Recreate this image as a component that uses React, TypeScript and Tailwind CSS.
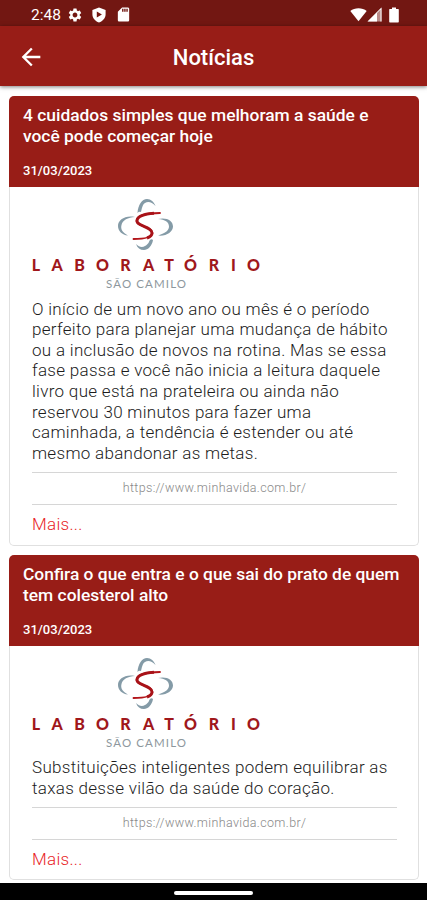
import React, { type ReactElement } from "react";
import { MdArrowBack, MdSettings, MdSdCard } from "react-icons/md";

type NewsItem = {
  title: string[];
  date: string;
  text: string[];
  source: string;
};

const news: NewsItem[] = [
  {
    title: ["4 cuidados simples que melhoram a saúde e", "você pode começar hoje"],
    date: "31/03/2023",
    text: [
      "O início de um novo ano ou mês é o período",
      "perfeito para planejar uma mudança de hábito",
      "ou a inclusão de novos na rotina. Mas se essa",
      "fase passa e você não inicia a leitura daquele",
      "livro que está na prateleira ou ainda não",
      "reservou 30 minutos para fazer uma",
      "caminhada, a tendência é estender ou até",
      "mesmo abandonar as metas.",
    ],
    source: "https://www.minhavida.com.br/",
  },
  {
    title: ["Confira o que entra e o que sai do prato de quem", "tem colesterol alto"],
    date: "31/03/2023",
    text: [
      "Substituições inteligentes podem equilibrar as",
      "taxas desse vilão da saúde do coração.",
    ],
    source: "https://www.minhavida.com.br/",
  },
];

const StatusBar = (): ReactElement => (
  <div className="flex h-[26px] shrink-0 items-center bg-[#721712] pt-[3px] pr-[28px] pl-[31px] text-white">
    <span className="w-[36px] pt-[2px] text-[15.5px] leading-none">2:48</span>
    <MdSettings className="h-4 w-4" />
    <svg viewBox="0 0 16 16" className="ml-2 h-4 w-4">
      <path fillRule="evenodd" fill="currentColor" d="M8 .6 14.6 3v4.5c0 3.7-2.8 6.6-6.6 8-3.8-1.400-6.600-4.300-6.600-8V3zM5.800 4.500v6L10.900 7.500z" />
    </svg>
    <MdSdCard className="ml-2 h-[17px] w-[17px]" />
    <svg viewBox="0 0 17 15" className="ml-auto h-[15px] w-[17px]">
      <path fill="currentColor" d="M.3 4C4.600.2 12.400.2 16.700 4L8.500 14.200z" />
    </svg>
    <svg viewBox="0 0 15 15" className="h-[15px] w-[15px]">
      <path fill="currentColor" fillOpacity=".5" d="M14.500.5v14H.5z" />
      <path fill="currentColor" d="M10 5v9.500H.5zM14.500.5v14h-1V2.500L10 6V5z" />
    </svg>
    <svg viewBox="0 0 10 16" className="ml-[7px] h-4 w-[10px]">
      <path fill="currentColor" d="M3 .5h4v1.500h2.200q.6 0 .6.600v12.200q0 .7-.7.700H.9q-.7 0-.7-.7V2.600q0-.6.600-.6H3z" />
    </svg>
  </div>
);

const Logo = (): ReactElement => (
  <svg viewBox="0 0 232 94" className="-ml-[2px] block h-[94px] w-[232px]">
    <g fill="#849ba7">
      <path d="M107.500 16C108 8 112 2 117 2C121 2 124 5 125.500 9C122 5 118 4 115 6C112 8 112 12 111 15Q109 14 107.500 16Z" />
      <path d="M105 20C95 18 88 23 88 29C88 34 92 38 98 38.500C92 35 90.500 32 91.500 28C92.500 23 98 20.500 105 20Z" />
      <path d="M128 22C137 20 143 24 143 29.500C143 35 136 39.500 128 38.500C136 36 139 33 139 29.500C139 25 135 22.500 128 22Z" />
      <path d="M106 47C109 50 112 51 115 49C119 47 119 44 120 43Q121.500 41.500 123 43C122 49 118 53 114 53C110 53 107.500 51 106 47Z" />
    </g>
    <path d="M130 16C119 16 107 18 106.500 24C106 30 122.500 29 122.500 36C122 41 114 42 103.500 42" fill="none" stroke="#b3161b" strokeWidth="1.800" strokeLinecap="round" />
    <path d="M124 16.200C113 17 107 20 107 24C107 29 122 30 122 36C122 38 120 40 117 41" fill="none" stroke="#a81218" strokeWidth="3" />
    <text
      x="6 27 49.500 72.500 95.500 118.500 139 160.500 184 203.500 223.500"
      y="74"
      textAnchor="middle"
      className="fill-[#a0171b] font-[Lato] text-[16px] font-black"
    >
      LABORATÓRIO
    </text>
    <text
      x="76"
      y="90.5"
      textLength="80"
      className="fill-[#8d979d] font-[Lato] text-[11.5px]"
    >
      SÃO CAMILO
    </text>
  </svg>
);

const NewsCard = ({ item }: { item: NewsItem }): ReactElement => (
  <article>
    <header className="h-[91px] rounded-t-[5px] bg-[#981d17] px-[14px] pt-[9px] text-white">
      <h2 className="text-[17.4px] leading-[21px] font-medium whitespace-nowrap">
        {item.title.map((line) => (
          <span key={line} className="block">{line}</span>
        ))}
      </h2>
      <p className="mt-[16px] text-[13px] leading-4 font-medium">{item.date}</p>
    </header>
    <div className="rounded-b-[5px] border border-t-0 border-[#e0e0e0] bg-white pt-[10px] pr-[21px] pl-[22px]">
      <Logo />
      <p className="mt-[7.5px] text-[17px] leading-[20.625px] font-light tracking-[0.3px] whitespace-nowrap text-[#1c1c1c]">
        {item.text.map((line) => (
          <span key={line} className="block">{line}</span>
        ))}
      </p>
      <div className="mt-[8.5px] flex h-[33px] items-center justify-center border-y border-[#d6d6d6] text-[12.5px] font-light tracking-[0.36px] text-[#888]">
        {item.source}
      </div>
      <p className="pt-[9px] pb-[10.5px] text-[17px] leading-[20px] font-light tracking-[0.3px] text-[#e8231f]">Mais...</p>
    </div>
  </article>
);

const App = (): ReactElement => {
  return (
    <div className="flex h-[900px] w-[427px] flex-col overflow-hidden bg-white font-[Roboto,sans-serif]">
      <StatusBar />
      <div className="z-10 grid h-[60px] shrink-0 grid-cols-[60px_1fr_60px] items-center bg-[#981d17] text-white shadow-[0_1px_4px_rgba(0,0,0,0.5)]">
        <MdArrowBack className="mt-[2px] ml-[17px] h-7 w-7" />
        <h1 className="pt-[3px] text-center text-[22px] font-medium">Notícias</h1>
      </div>
      <main className="flex min-h-0 flex-1 flex-col gap-[9px] pt-[10px] pr-2 pl-[9px]">
        {news.map((item) => (
          <NewsCard key={item.title[0]} item={item} />
        ))}
      </main>
      <div className="flex h-[17px] shrink-0 justify-center bg-black pt-2">
        <div className="h-[3.5px] w-[79px] rounded-full bg-white" />
      </div>
    </div>
  );
};

export default App;
